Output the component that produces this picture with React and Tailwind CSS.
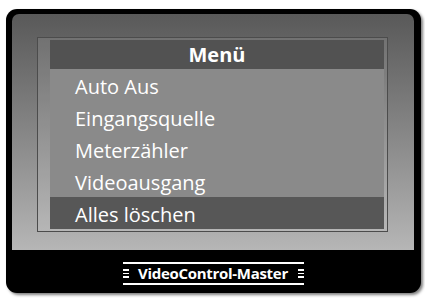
const items = ['Auto Aus', 'Eingangsquelle', 'Meterzähler', 'Videoausgang', 'Alles löschen'];

function Dashes() {
  return (
    <div className="flex flex-col gap-[2px]">
      <span className="block w-[6px] h-[1.5px] bg-white" />
      <span className="block w-[6px] h-[1.5px] bg-white" />
      <span className="block w-[6px] h-[1.5px] bg-white" />
    </div>
  );
}

export default function App() {
  return (
    <div className="w-[425px] h-[298px] bg-white pl-[6px] pt-[9px]" style={{ fontFamily: '"Open Sans", "Noto Sans", sans-serif' }}>
      <div className="w-[415px] h-[284px] rounded-[11px] bg-black pt-[5px] pl-[6px] pr-[7px] pb-[2px] flex flex-col shadow-[2px_2px_3px_rgba(0,0,0,0.5)]">
        {/* screen bezel */}
        <div className="h-[236px] rounded-t-[7px] bg-gradient-to-b from-[#595959] to-[#b6b6b6] pl-[25px] pr-[26px] pt-[23px] pb-[18px] flex">
          <div className="flex-1 border border-[#4c4c4c] bg-white/10 pl-[12px] pr-[3px] pt-[2px] pb-[2px] flex">
            <div className="flex-1 flex flex-col">
              <div className="h-[29px] bg-[#525252] flex items-center justify-center text-white font-bold text-[20px] leading-none">
                Menü
              </div>
              {items.map((t, i) => (
                <div
                  key={t}
                  className={
                    i === items.length - 1
                      ? 'h-[32px] bg-[#575757] flex items-center pl-[25px] pt-[3px] text-white text-[20px] leading-none'
                      : 'h-[32px] bg-[#8a8a8a] flex items-center pl-[25px] pt-[3px] text-white text-[20px] leading-none'
                  }
                >
                  {t}
                </div>
              ))}
            </div>
          </div>
        </div>
        {/* bottom band */}
        <div className="flex-1 flex items-center justify-center pt-[6px]">
          <div className="w-[181px] flex flex-col items-center">
            <div className="w-full h-[2px] bg-white" />
            <div className="w-full flex items-center justify-between py-[2px]">
              <Dashes />
              <span className="text-white font-bold text-[15px] leading-none tracking-[-0.3px]">VideoControl-Master</span>
              <Dashes />
            </div>
            <div className="w-full h-[2px] bg-white" />
          </div>
        </div>
      </div>
    </div>
  );
}
